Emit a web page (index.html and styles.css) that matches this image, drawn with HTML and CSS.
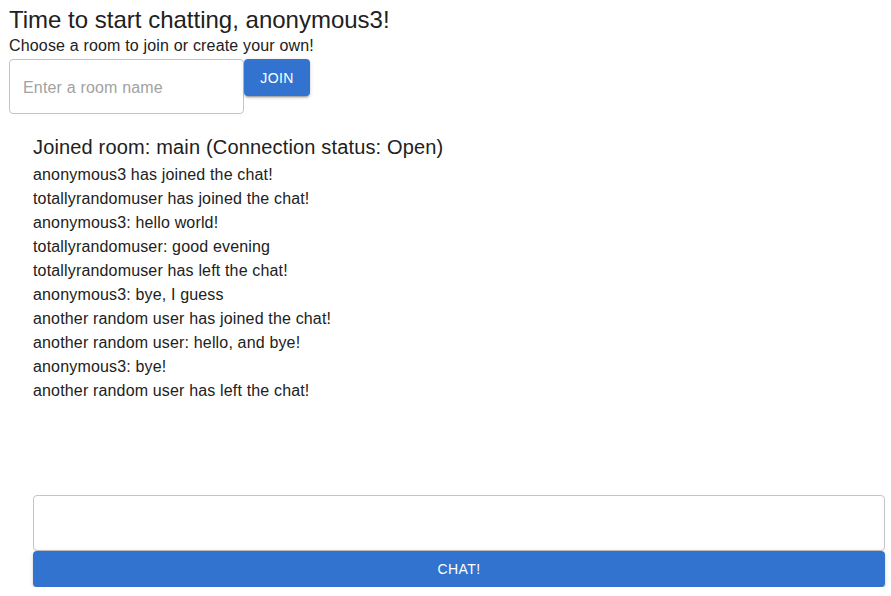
FILE: index.html
```html
<!DOCTYPE html>
<html>
<head>
<meta charset="utf-8">
<link rel="stylesheet" href="styles.css">
</head>
<body>
  <h1 class="title">Time to start chatting, anonymous3!</h1>
  <p class="subtitle">Choose a room to join or create your own!</p>
  <div class="join-row">
    <div class="room-input"><span class="placeholder">Enter a room name</span></div>
    <button class="btn join-btn">JOIN</button>
  </div>
  <section class="room">
    <h2 class="room-title">Joined room: main (Connection status: Open)</h2>
    <ul class="messages">
      <li>anonymous3 has joined the chat!</li>
      <li>totallyrandomuser has joined the chat!</li>
      <li>anonymous3: hello world!</li>
      <li>totallyrandomuser: good evening</li>
      <li>totallyrandomuser has left the chat!</li>
      <li>anonymous3: bye, I guess</li>
      <li>another random user has joined the chat!</li>
      <li>another random user: hello, and bye!</li>
      <li>anonymous3: bye!</li>
      <li>another random user has left the chat!</li>
    </ul>
    <div class="chat-form">
      <div class="chat-input"></div>
      <button class="btn chat-btn">CHAT!</button>
    </div>
  </section>
</body>
</html>
```

FILE: styles.css
```css
* { box-sizing: border-box; }
html, body { background: #fff; }
body {
  margin: 8px 0 0 9px;
  font-family: "Liberation Sans", Arial, sans-serif;
  color: #212121;
}
.title {
  margin: 0 0 5px 0;
  font-size: 24px;
  line-height: 24px;
  font-weight: 400;
}
.subtitle {
  margin: 0;
  font-size: 16px;
  line-height: 18px;
  letter-spacing: 0.17px;
}
.join-row {
  display: flex;
  align-items: flex-start;
  margin-top: 4px;
}
.room-input {
  width: 235px;
  height: 55px;
  border: 1px solid #c4c4c4;
  border-radius: 4px;
  display: flex;
  align-items: center;
  padding-left: 13px;
  padding-top: 2px;
}
.placeholder {
  font-size: 16px;
  color: #a2a2a2;
  letter-spacing: 0.17px;
}
.btn {
  font-family: "Liberation Sans", Arial, sans-serif;
  background: #3273cf;
  color: #fff;
  border: none;
  border-radius: 4px;
  font-size: 14px;
  font-weight: 400;
  letter-spacing: 0.4px;
  box-shadow: 0 3px 1px -2px rgba(0,0,0,0.2), 0 2px 2px 0 rgba(0,0,0,0.14), 0 1px 5px 0 rgba(0,0,0,0.12);
  padding: 0;
}
.join-btn {
  width: 66px;
  height: 37px;
}
.room {
  padding: 21px 0 0 24px;
}
.room-title {
  margin: 0 0 4px 0;
  font-size: 20px;
  line-height: 24px;
  font-weight: 400;
  letter-spacing: 0.16px;
}
.messages {
  list-style: none;
  margin: 0;
  padding: 0;
  height: 332px;
  font-size: 16px;
  line-height: 24px;
  letter-spacing: 0.16px;
}
.chat-form {
  width: 852px;
  display: flex;
  flex-direction: column;
}
.chat-input {
  height: 56px;
  border: 1px solid #c4c4c4;
  border-radius: 4px;
}
.chat-btn {
  height: 36px;
  width: 100%;
}
```
